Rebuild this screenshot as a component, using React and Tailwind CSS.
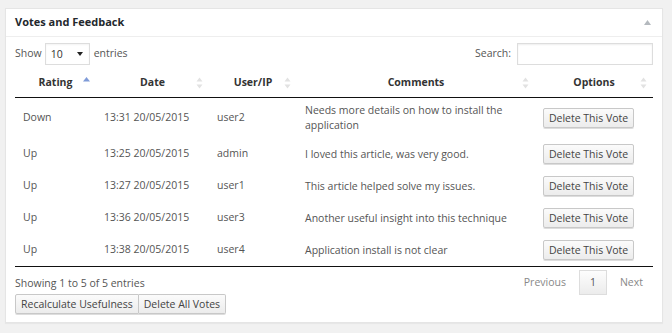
import React from 'react';

const votes = [
  { rating: 'Down', date: '13:31 20/05/2015', user: 'user2', comment: 'Needs more details on how to install the application' },
  { rating: 'Up', date: '13:25 20/05/2015', user: 'admin', comment: 'I loved this article, was very good.' },
  { rating: 'Up', date: '13:27 20/05/2015', user: 'user1', comment: 'This article helped solve my issues.' },
  { rating: 'Up', date: '13:36 20/05/2015', user: 'user3', comment: 'Another useful insight into this technique' },
  { rating: 'Up', date: '13:38 20/05/2015', user: 'user4', comment: 'Application install is not clear' },
];

const columns = [
  { label: 'Rating', width: 81, active: true },
  { label: 'Date', width: 113 },
  { label: 'User/IP', width: 88 },
  { label: 'Comments', width: 238 },
  { label: 'Options', width: 118 },
];

const SortIcon = ({ active }) => (
  <svg width="7" height="12" viewBox="0 0 7 12" className="absolute right-[6px] top-[3px]">
    {active ? (
      <path d="M3.5 0 L7 4.5 H0 Z" fill="#7f9bd8" />
    ) : (
      <>
        <path d="M3.5 0.5 L6.5 4.5 H0.5 Z" fill="#e2e2e2" />
        <path d="M3.5 11.5 L6.5 7.5 H0.5 Z" fill="#e2e2e2" />
      </>
    )}
  </svg>
);

const Button = ({ children, className = '' }) => (
  <button
    className={`h-[20px] border border-[#c8c8c8] bg-gradient-to-b from-[#fbfbfb] to-[#ececec] text-[10.5px] text-[#444] leading-none whitespace-nowrap shadow-[0_1px_0_#ddd] ${className}`}
  >
    {children}
  </button>
);

export default function App() {
  return (
    <div className="min-h-screen bg-[#f1f1f1] pt-2 pl-[5px] font-['Open_Sans',sans-serif] text-[10.5px] text-[#555]">
      <div className="w-[658px] h-[315px] bg-white border border-[#e5e5e5] shadow-[0_1px_1px_rgba(0,0,0,0.04)]">
        {/* Panel header */}
        <div className="h-[28px] flex items-center justify-between pl-[9px] pr-[11px] border-b border-[#eee]">
          <h3 className="text-[11px] font-bold text-[#23282d]">Votes and Feedback</h3>
          <svg width="7" height="5" viewBox="0 0 7 5">
            <path d="M3.5 0 L7 5 H0 Z" fill="#b4b9be" />
          </svg>
        </div>

        <div className="px-[9px] pt-[6px]">
          {/* Controls */}
          <div className="flex items-center justify-between h-[22px]">
            <div className="flex items-center">
              <span>Show</span>
              <div className="ml-[3px] w-[45px] h-[22px] border border-[#ddd] flex items-center justify-between pl-[5px] pr-[6px] text-[#333] shadow-[inset_0_1px_2px_rgba(0,0,0,0.05)]">
                <span className="mt-[2px]">10</span>
                <svg width="6" height="4" viewBox="0 0 6 4">
                  <path d="M0 0 H6 L3 4 Z" fill="#222" />
                </svg>
              </div>
              <span className="ml-[4px]">entries</span>
            </div>
            <div className="flex items-center">
              <span>Search:</span>
              <div className="ml-[6px] w-[136px] h-[22px] border border-[#ddd] shadow-[inset_0_1px_2px_rgba(0,0,0,0.07)]" />
            </div>
          </div>

          {/* Table */}
          <table className="mt-[9px] w-[638px] table-fixed border-collapse">
            <colgroup>
              {columns.map(c => (
                <col key={c.label} style={{ width: c.width }} />
              ))}
            </colgroup>
            <thead>
              <tr className="border-b border-[#111]">
                {columns.map(c => (
                  <th key={c.label} className="relative h-[23px] p-0 pb-[5px] align-middle text-center font-bold text-[#333]">
                    {c.label}
                    <SortIcon active={c.active} />
                  </th>
                ))}
              </tr>
            </thead>
            <tbody>
              {votes.map((v, i) => (
                <tr key={i} className={i === 0 ? 'h-[41px]' : 'h-[32px]'}>
                  <td className="pl-[8px] align-middle">{v.rating}</td>
                  <td className="pl-[8px] align-middle">{v.date}</td>
                  <td className="pl-[8px] align-middle">{v.user}</td>
                  <td className="pl-[8px] pr-[8px] align-middle leading-[15px]">{v.comment}</td>
                  <td className="pl-[8px] align-middle">
                    <Button className="rounded-[2px] w-[91px] h-[19px]">Delete This Vote</Button>
                  </td>
                </tr>
              ))}
            </tbody>
          </table>

          {/* Footer */}
          <div className="border-t border-[#111] w-[638px] flex items-start justify-between h-[28px]">
            <span className="mt-[9px]">Showing 1 to 5 of 5 entries</span>
            <div className="flex items-center mt-[3px] pr-[10px]">
              <span className="text-[#888]">Previous</span>
              <span className="ml-[13px] w-[28px] h-[25px] flex items-center justify-center border border-[#ddd] bg-gradient-to-b from-[#fdfdfd] to-[#ececec] text-[#555]">
                1
              </span>
              <span className="ml-[13px] text-[#888]">Next</span>
            </div>
          </div>
          <div className="flex">
            <Button className="rounded-l-[2px] px-[5px]">Recalculate Usefulness</Button>
            <Button className="rounded-r-[2px] border-l-0 px-[5px]">Delete All Votes</Button>
          </div>
        </div>
      </div>
    </div>
  );
}
